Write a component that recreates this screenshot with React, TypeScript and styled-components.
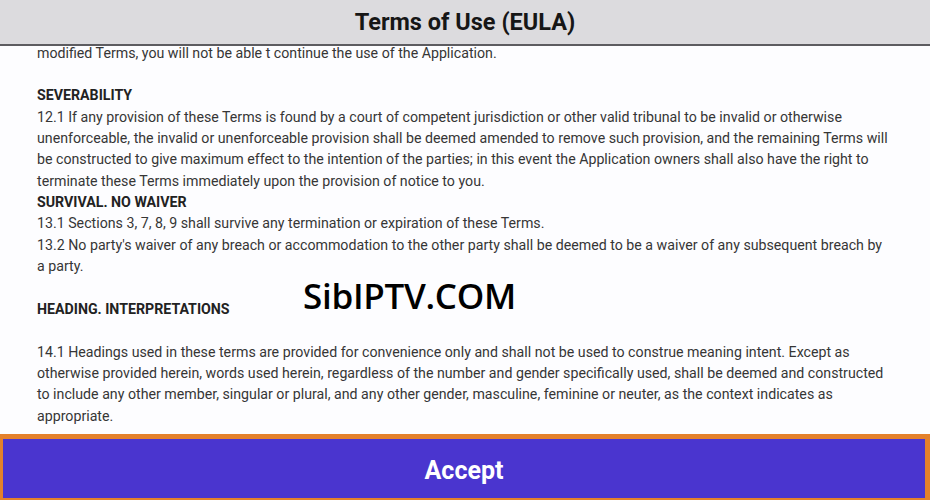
import React from "react";
import styled, { createGlobalStyle } from "styled-components";

const Global = createGlobalStyle`
  html, body { margin: 0; padding: 0; height: 100%; background: #fdfdff; }
  #root { height: 100%; }
  * { box-sizing: border-box; }
`;

const Screen = styled.div`
  position: relative;
  height: 500px;
  width: 930px;
  display: flex;
  flex-direction: column;
  overflow: hidden;
  font-family: Roboto, "Liberation Sans", sans-serif;
  background: #fdfdff;
`;

const Header = styled.header`
  flex: 0 0 auto;
  height: 46px;
  background: #dcdbde;
  border-bottom: 2px solid #5d5c60;
  display: flex;
  align-items: center;
  justify-content: center;
  position: relative;
  z-index: 2;
`;

const Title = styled.h1`
  margin: 0;
  font-size: 23.5px;
  font-weight: 700;
  color: #161616;
`;

const Body = styled.main`
  flex: 1 1 auto;
  overflow: hidden;
  padding: 0 40px 0 37px;
  position: relative;
`;

const Text = styled.div`
  margin-top: -3.5px;
  font-size: 14.2px;
  line-height: 21.36px;
  color: #363636;
`;

const Para = styled.p`
  margin: 0;
`;

const Heading = styled.p`
  margin: 0;
  font-weight: 700;
  color: #222;
`;

const Blank = styled.div`
  height: 21.36px;
`;

const Watermark = styled.div`
  position: absolute;
  left: 303px;
  top: 272px;
  font-family: "Open Sans", "Noto Sans", sans-serif;
  font-weight: 600;
  font-size: 35px;
  color: #000;
  letter-spacing: -0.3px;
  z-index: 3;
`;

const Footer = styled.footer`
  flex: 0 0 66px;
  background: #e4812c;
  padding: 5px 5px 2px 3px;
  display: flex;
`;

const AcceptButton = styled.button`
  flex: 1;
  border: none;
  background: #4a35cf;
  color: #fff;
  font-family: Roboto, "Liberation Sans", sans-serif;
  font-weight: 700;
  font-size: 25px;
  display: flex;
  align-items: center;
  justify-content: center;
  padding: 4px 0 0 0;
  cursor: pointer;
`;

export default function App() {
  return (
    <>
      <Global />
      <Screen>
        <Header>
          <Title>Terms of Use (EULA)</Title>
        </Header>
        <Body>
          <Text>
            <Para>modified Terms, you will not be able t continue the use of the Application.</Para>
            <Blank />
            <Heading>SEVERABILITY</Heading>
            <Para>
              12.1 If any provision of these Terms is found by a court of competent jurisdiction or other valid tribunal to be invalid or otherwise unenforceable, the invalid or unenforceable provision shall be deemed amended to remove such provision, and the remaining Terms will be constructed to give maximum effect to the intention of the parties; in this event the Application owners shall also have the right to terminate these Terms immediately upon the provision of notice to you.
            </Para>
            <Heading>SURVIVAL. NO WAIVER</Heading>
            <Para>13.1 Sections 3, 7, 8, 9 shall survive any termination or expiration of these Terms.</Para>
            <Para>
              13.2 No party's waiver of any breach or accommodation to the other party shall be deemed to be a waiver of any subsequent breach by a party.
            </Para>
            <Blank />
            <Heading>HEADING. INTERPRETATIONS</Heading>
            <Blank />
            <Para>
              14.1 Headings used in these terms are provided for convenience only and shall not be used to construe meaning intent. Except as otherwise provided herein, words used herein, regardless of the number and gender specifically used, shall be deemed and constructed to include any other member, singular or plural, and any other gender, masculine, feminine or neuter, as the context indicates as appropriate.
            </Para>
          </Text>
        </Body>
        <Watermark>SibIPTV.COM</Watermark>
        <Footer>
          <AcceptButton>Accept</AcceptButton>
        </Footer>
      </Screen>
    </>
  );
}
